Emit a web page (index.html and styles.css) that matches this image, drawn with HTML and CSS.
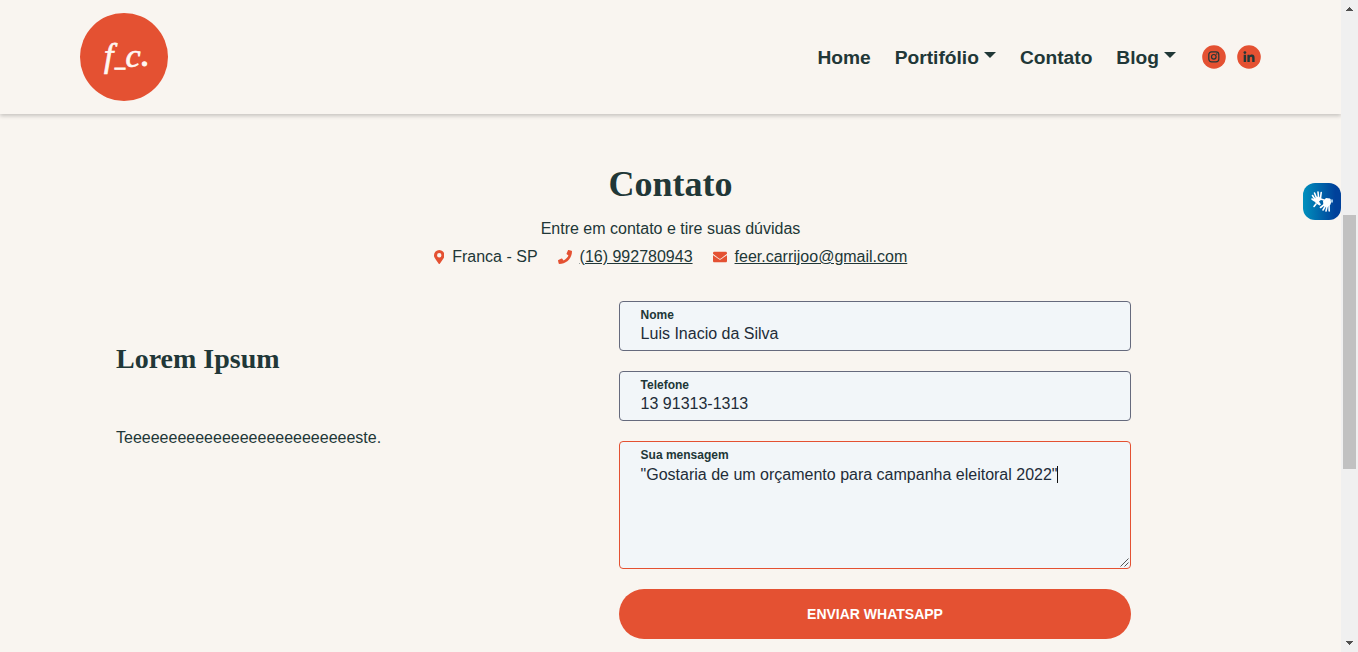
FILE: index.html
```html
<!DOCTYPE html>
<html lang="pt-BR">
<head>
<meta charset="utf-8">
<title>Contato</title>
<link rel="stylesheet" href="styles.css">
</head>
<body>
<div class="page">
  <header class="header">
    <a class="logo" aria-label="f_c.">
      <svg width="88" height="88" viewBox="0 0 88 88"><circle cx="44" cy="44" r="44" fill="#e45132"/><text class="logo-text"><tspan x="24" y="53.500">f</tspan><tspan class="logo-bar" x="35" y="53">_</tspan><tspan class="logo-c" x="45.500" y="53.500">c</tspan><tspan class="logo-dot" x="61" y="53">.</tspan></text></svg>
    </a>
    <nav class="nav">
      <a>Home</a>
      <a class="dropdown">Portifólio</a>
      <a>Contato</a>
      <a class="dropdown">Blog</a>
    </nav>
    <div class="social">
      <svg width="24" height="24" viewBox="0 0 24 24"><circle cx="12" cy="12" r="11.8" fill="#e45132"/><g fill="none" stroke="#213737" stroke-width="1.2"><rect x="6.8" y="6.8" width="10" height="10" rx="2.8"/><circle cx="11.8" cy="11.8" r="2.3"/></g><circle cx="14.7" cy="9" r=".75" fill="#213737"/></svg>
      <svg width="24" height="24" viewBox="0 0 24 24"><circle cx="12" cy="12" r="11.8" fill="#e45132"/><g fill="#213737"><circle cx="7.9" cy="7.6" r="1.4"/><path d="M6.7 9.700h2.400v7.300H6.700zM10.400 9.700h2.200v1c.4-.7 1.200-1.200 2.200-1.200 2.300 0 2.800 1.500 2.800 3.500v4h-2.400v-3.500c0-.8 0-1.800-1.100-1.800s-1.300.8-1.300 1.800v3.500h-2.400z"/></g></svg>
    </div>
  </header>
  <main class="main">
    <h1 class="title">Contato</h1>
    <p class="subtitle">Entre em contato e tire suas dúvidas</p>
    <ul class="info">
      <li><svg class="pin" width="10.5" height="14" viewBox="0 0 384 512"><path fill="#e45132" d="M172 502C27 291 0 270 0 192a192 192 0 1 1 384 0c0 78-27 99-172 310-9 13-30 13-40 0zM192 272a80 80 0 1 0 0-160 80 80 0 0 0 0 160z"/></svg><span>Franca - SP</span></li>
      <li><svg class="phone" width="14" height="14" viewBox="0 0 512 512"><path fill="#e45132" d="M493 25 389 1c-11-3-23 3-27 14l-48 112c-4 10-1 21 7 28l61 49c-36 77-99 140-178 178l-49-61c-7-8-18-11-28-7L15 362c-11 4-17 16-14 27l24 104c3 11 12 19 24 19 256 0 463-207 463-463 0-11-8-21-19-24z"/></svg><a class="link">(16) 992780943</a></li>
      <li><svg class="mail" width="14" height="14" viewBox="0 0 512 512"><path fill="#e45132" d="M502 191c4-3 10 0 10 5v204c0 27-21 48-48 48H48c-27 0-48-21-48-48V196c0-5 6-8 10-5 22 17 52 40 155 114 21 16 57 48 91 48 34 0 71-33 91-48 103-74 133-97 155-114zM256 320c23 0 57-29 74-41 133-97 143-105 174-129 5-5 8-12 8-19v-19c0-27-21-48-48-48H48c-27 0-48 21-48 48v19c0 7 3 14 8 19 31 24 41 32 174 129 17 12 51 41 74 41z"/></svg><a class="link">feer.carrijoo@gmail.com</a></li>
    </ul>
    <div class="columns">
      <section class="about">
        <h2 class="about-title">Lorem Ipsum</h2>
        <p class="about-text">Teeeeeeeeeeeeeeeeeeeeeeeeeeste.</p>
      </section>
      <form class="form">
        <div class="field"><label class="label">Nome</label><div class="value">Luis Inacio da Silva</div></div>
        <div class="field"><label class="label">Telefone</label><div class="value">13 91313-1313</div></div>
        <div class="field message"><label class="label">Sua mensagem</label><div class="value">"Gostaria de um orçamento para campanha eleitoral 2022"<span class="cursor"></span></div>
          <svg class="grip" width="9" height="9" viewBox="0 0 9 9"><path d="M.5 8.5l8-8M4.5 8.5l4-4" stroke="#555" fill="none"/></svg>
        </div>
        <button class="submit" type="button">ENVIAR WHATSAPP</button>
      </form>
    </div>
  </main>
  <div class="widget">
    <svg width="38" height="37" viewBox="0 0 38 37"><g fill="none" stroke="#fff" stroke-linecap="round" stroke-width="1.6"><path d="M12.500 17L9.500 12.500M13.500 15L11.500 10M15.500 14L15 9M17.500 15L18.200 9.500M12 18L9 16M13 21l-2 2.500"/><path d="M22 21l-4.500 3.500M23 22l-3 5M24.500 22l-1.500 6M26 21l.2 7M21 17l-3.500-1"/></g><path fill="#fff" d="M11.500 16.500l2-3 4.500 1 .5 2-2.500 2 2 3-1.500 1-4-2.500zM20 18l3-3 4 .5 1.500 2-1 4-3 2.500-4-1z"/><path fill="#9fc7e6" d="M27 16.500h3v3h-2z"/></svg>
  </div>
</div>
<div class="scrollbar">
  <svg width="7" height="4" viewBox="0 0 7 4"><path fill="#505050" d="M3 0h1v1h1v1h1v1h1v1H0V3h1V2h1V1h1z"/></svg>
  <div class="thumb"></div>
  <svg class="down" width="7" height="4" viewBox="0 0 7 4"><path fill="#505050" d="M0 0h7v1H6v1H5v1H4v1H3V3H2V2H1V1H0z"/></svg>
</div>
</body>
</html>
```
FILE: styles.css
```css
* { box-sizing: border-box; }
body {
  margin: 0;
  height: 652px;
  overflow: hidden;
  display: flex;
  background: #f9f5f0;
  color: #213737;
  font: 16px/24px "Liberation Sans", Arial, sans-serif;
}
h1, h2, p, ul { margin: 0; padding: 0; }
svg { display: block; flex: none; }
.page { position: relative; width: 1341px; height: 652px; overflow: hidden; }
.header {
  height: 114px;
  padding: 0 80px;
  display: flex;
  align-items: center;
  box-shadow: 0 2px 4px rgba(0, 0, 0, .2);
}
.logo { margin-right: auto; }
.logo-text { font: italic 34px "Liberation Serif", serif; fill: #fff8f2; stroke: #fff8f2; stroke-width: .7px; }
.logo-bar { font-size: 20px; stroke-width: 1px; }
.logo-c { font-size: 34px; }
.logo-dot { font-size: 35px; stroke-width: 1.2px; }
.nav { display: flex; gap: 24px; padding-top: 1px; font-size: 19.2px; font-weight: bold; }
.nav a { white-space: nowrap; }
.dropdown::after {
  content: "";
  display: inline-block;
  margin-left: 5px;
  vertical-align: 5.5px;
  border-top: 6px solid;
  border-right: 6px solid transparent;
  border-left: 6px solid transparent;
}
.social { display: flex; gap: 11px; margin-left: 26px; }
.main { padding-top: 49px; }
.title, .about-title { font-family: "Liberation Serif", "Times New Roman", serif; font-weight: bold; }
.title { font-size: 36px; line-height: 43px; text-align: center; }
.subtitle { margin-top: 11px; text-align: center; }
.info { display: flex; justify-content: center; gap: 20px; margin-top: 4px; list-style: none; }
.info li { display: flex; align-items: center; gap: 8px; }
.info svg { margin-top: -1px; }
.link { text-decoration: underline; }
.columns { display: grid; grid-template-columns: 503px 512px; padding: 32px 0 0 116px; }
.about-title { margin-top: 41px; font-size: 28px; line-height: 34px; }
.about-text { margin-top: 50px; }
.form { display: flex; flex-direction: column; gap: 20px; }
.field {
  position: relative;
  height: 50px;
  padding: 6px 20.6px;
  border: 1px solid #666a7d;
  border-radius: 4px;
  background: #f2f6f9;
}
.label { display: block; font-size: 12px; font-weight: bold; line-height: 14px; }
.value { line-height: 24px; color: #222c38; }
.message { height: 128px; border-color: #e45132; }
.message .value { margin-top: 1px; }
.cursor { display: inline-block; width: 1px; height: 17px; margin-left: -.6px; background: #111; vertical-align: -3px; }
.grip { position: absolute; right: 1px; bottom: 1px; }
.submit {
  height: 50px;
  border: 0;
  border-radius: 25px;
  background: #e45132;
  color: #fff;
  font: bold 14px "Liberation Sans", Arial, sans-serif;
}
.widget {
  position: absolute;
  top: 183px;
  right: 0;
  width: 38px;
  height: 37px;
  border-radius: 12px;
  background: linear-gradient(90deg, #0090bd, #00419a 85%);
}
.scrollbar {
  width: 17px;
  height: 652px;
  padding: 7px 0;
  display: flex;
  flex-direction: column;
  align-items: center;
  background: #f0f0f0;
}
.thumb { width: 13px; height: 254px; margin-top: 204px; background: #c1c1c1; }
.down { margin-top: auto; }
```
